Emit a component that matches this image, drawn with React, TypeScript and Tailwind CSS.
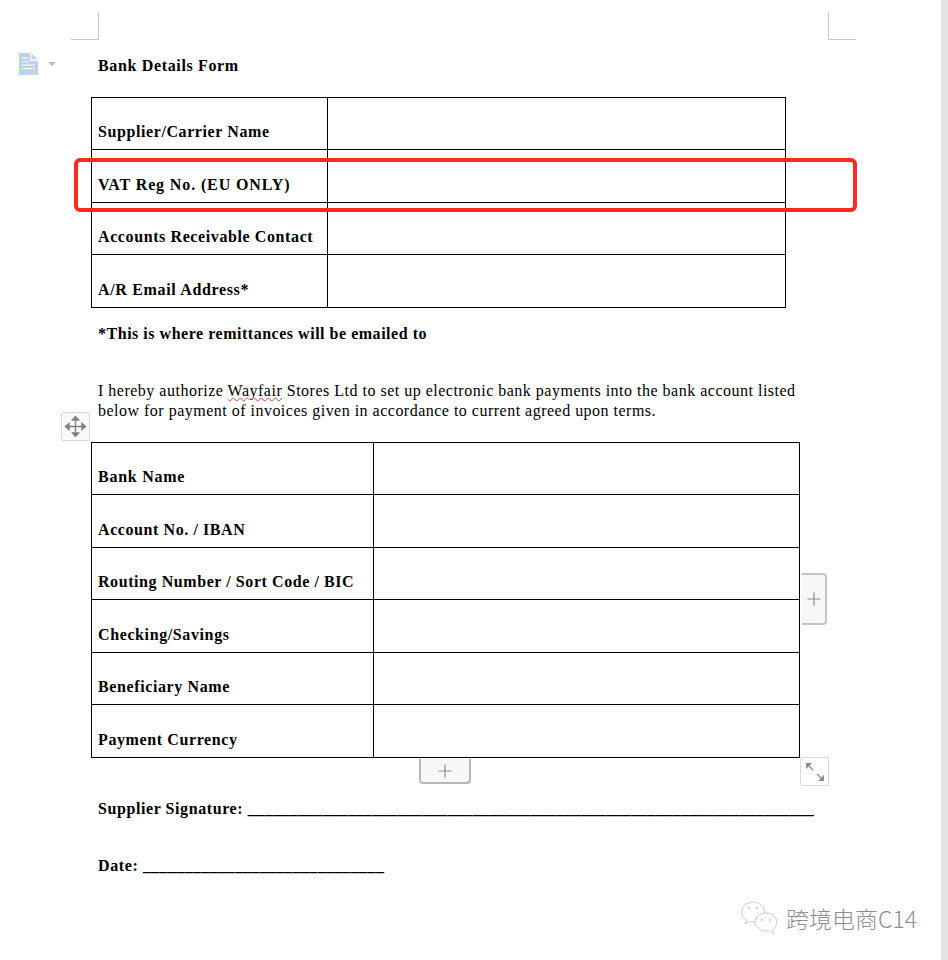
import React from "react";

const serif = "font-['Liberation_Serif','Times_New_Roman',serif]";

type RowData = { label: string; track: string };

function Row({ label, track, first, h }: RowData & { first: string; h: string }) {
  return (
    <div className={`flex ${h} border-b border-black`}>
      <div className={`${first} ${track} shrink-0 border-r border-black pl-[6px] flex items-end pb-[8px] font-bold text-[16px] leading-[18px] text-black`}>
        {label}
      </div>
      <div className="flex-1" />
    </div>
  );
}

function Table({ rows, width, first }: { rows: RowData[]; width: string; first: string }) {
  return (
    <div className={`${width} border-t border-l border-r border-black`}>
      {rows.map((r, i) => (
        <Row key={r.label} {...r} first={first} h={i % 2 === 0 ? "h-[52px]" : "h-[53px]"} />
      ))}
    </div>
  );
}

function CropMark({ className }: { className: string }) {
  return <div className={`absolute w-[28px] h-[28px] border-[#c8c8c8] ${className}`} />;
}

export default function App() {
  return (
    <div className={`relative w-[948px] h-[960px] bg-white overflow-hidden flex ${serif}`}>
      <div className="w-[941px] pl-[91px] pt-[56px] flex flex-col text-black">
        <div className="pl-[7px] h-[41px] font-bold text-[16px] leading-[20px] tracking-[0.65px]">Bank Details Form</div>
        <Table
          width="w-[695px]"
          first="w-[236px]"
          rows={[
            { label: "Supplier/Carrier Name", track: "tracking-[0.59px]" },
            { label: "VAT Reg No. (EU ONLY)", track: "tracking-[0.87px]" },
            { label: "Accounts Receivable Contact", track: "tracking-[0.6px]" },
            { label: "A/R Email Address*", track: "tracking-[0.66px]" },
          ]}
        />
        <div className="pl-[7px] mt-[16px] font-bold text-[16px] leading-[20px] tracking-[0.52px]">*This is where remittances will be emailed to</div>
        <div className="pl-[7px] mt-[37px] text-[16px] leading-[20px] w-[720px] whitespace-nowrap">
          <div className="tracking-[0.5px]">
            I hereby authorize{" "}
            <span className="underline decoration-wavy decoration-[#e04040] decoration-1 underline-offset-1">Wayfair</span>{" "}
            Stores Ltd to set up electronic bank payments into the bank account listed
          </div>
          <div className="tracking-[0.49px]">below for payment of invoices given in accordance to current agreed upon terms.</div>
        </div>
        <div className="mt-[21px]">
          <Table
            width="w-[709px]"
            first="w-[282px]"
            rows={[
              { label: "Bank Name", track: "tracking-[0.74px]" },
              { label: "Account No. / IBAN", track: "tracking-[0.58px]" },
              { label: "Routing Number / Sort Code / BIC", track: "tracking-[0.57px]" },
              { label: "Checking/Savings", track: "tracking-[0.61px]" },
              { label: "Beneficiary Name", track: "tracking-[0.61px]" },
              { label: "Payment Currency", track: "tracking-[0.61px]" },
            ]}
          />
        </div>
        <div className="pl-[7px] mt-[41px] font-bold text-[16px] leading-[20px] whitespace-nowrap">
          <span className="tracking-[0.58px]">Supplier Signature: </span>
          <span className="tracking-[0.33px]">____________________________________________________________________</span>
        </div>
        <div className="pl-[7px] mt-[37px] font-bold text-[16px] leading-[20px] whitespace-nowrap">
          <span className="tracking-[0.6px]">Date: </span>
          <span className="tracking-[0.32px]">_____________________________</span>
        </div>
      </div>
      <div className="w-[7px] bg-[#e4e4e6]" />

      {/* crop marks */}
      <CropMark className="left-[71px] top-[12px] border-r border-b" />
      <CropMark className="left-[828px] top-[12px] border-l border-b" />

      {/* doc icon */}
      <svg className="absolute left-[19px] top-[53px]" width="19" height="22" viewBox="0 0 19 22">
        <path d="M0 0H11V8H19V22H0Z" fill="#bfd2ec" />
        <path d="M12.5 0.5L19 6.5H12.5Z" fill="#bfd2ec" />
        <path d="M3 5H9.5M3 8.5H9.5M3 12H16M3 15.5H16" stroke="#fff" strokeWidth="1.2" fill="none" />
      </svg>
      <div className="absolute left-[48px] top-[62px] w-0 h-0 border-l-[4px] border-r-[4px] border-t-[4px] border-l-transparent border-r-transparent border-t-[#b8b8b8]" />

      {/* red highlight */}
      <div className="absolute left-[74px] top-[158px] w-[783px] h-[54px] border-4 border-[#fb2a1e] rounded-[6px]" />

      {/* table move handle */}
      <div className="absolute left-[61px] top-[412px] w-[29px] h-[29px] bg-[#fafafa] border border-[#d8d8d8] rounded-[2px] flex items-center justify-center">
        <svg width="23" height="23" viewBox="0 0 23 23" fill="none" stroke="#808080" strokeWidth="1.4">
          <path d="M11.5 2V21M2 11.5H21" />
          <path d="M8.5 5L11.5 1.5L14.5 5Z" fill="#808080" />
          <path d="M8.5 18L11.5 21.5L14.5 18Z" fill="#808080" />
          <path d="M5 8.5L1.5 11.5L5 14.5Z" fill="#808080" />
          <path d="M18 8.5L21.5 11.5L18 14.5Z" fill="#808080" />
        </svg>
      </div>

      {/* add column */}
      <div className="absolute left-[802px] top-[573px] w-[25px] h-[52px] bg-[#f7f7f7] border-t-2 border-r-2 border-b-2 border-[#c4c4c4] rounded-r-[4px] flex items-center justify-center">
        <svg width="14" height="14" viewBox="0 0 14 14" stroke="#8a8a8a" strokeWidth="1.2"><path d="M7 0.5V13.5M0.5 7H13.5" /></svg>
      </div>

      {/* add row */}
      <div className="absolute left-[419px] top-[759px] w-[52px] h-[25px] bg-[#f7f7f7] border-l-2 border-r-2 border-b-2 border-[#b8b8b8] rounded-b-[4px] flex items-center justify-center">
        <svg width="14" height="14" viewBox="0 0 14 14" stroke="#8a8a8a" strokeWidth="1.2"><path d="M7 0.5V13.5M0.5 7H13.5" /></svg>
      </div>

      {/* resize handle */}
      <div className="absolute left-[800px] top-[757px] w-[29px] h-[29px] bg-white border border-[#dcdcdc] rounded-[2px]">
        <svg className="absolute left-[3px] top-[3px]" width="22" height="22" viewBox="0 0 22 22" fill="#8c8c8c" stroke="#8c8c8c">
          <path d="M2 2H8L2 8Z" stroke="none" />
          <path d="M20 20H14L20 14Z" stroke="none" />
          <path d="M4 4L9 9M13 13L18 18" strokeWidth="1.4" fill="none" />
        </svg>
      </div>

      {/* watermark */}
      <div className="absolute left-[741px] top-[900px] flex items-center">
        <svg width="39" height="36" viewBox="0 0 39 36" fill="#fff" stroke="#c0c0c0" strokeWidth="0.8">
          <path d="M12 2C5.5 2 0.8 6.5 0.8 12C0.8 15.5 2.7 18.3 5.5 20.2L4.5 24L8.8 21.6C10 21.9 11 22 12 22C18.5 22 23.5 17.5 23.5 12C23.5 6.5 18.5 2 12 2Z" />
          <path d="M25 13C19 13 14 17 14 22C14 27 19 31 25 31C26.2 31 27.4 30.8 28.5 30.5L32.5 33.5L31.5 29.5C34 27.8 35.8 25.2 35.8 22C35.8 17 31 13 25 13Z" />
          <circle cx="8" cy="8" r="1" fill="none" />
          <circle cx="16" cy="8" r="1" fill="none" />
          <circle cx="21" cy="20" r="1" fill="none" />
          <circle cx="29" cy="20" r="1" fill="none" />
        </svg>
        <span className="ml-[6px] text-[23px] leading-[30px] text-[#8e8e8e] font-light whitespace-nowrap font-['Noto_Sans_CJK_SC','Noto_Sans',sans-serif]">跨境电商C14</span>
      </div>
    </div>
  );
}
